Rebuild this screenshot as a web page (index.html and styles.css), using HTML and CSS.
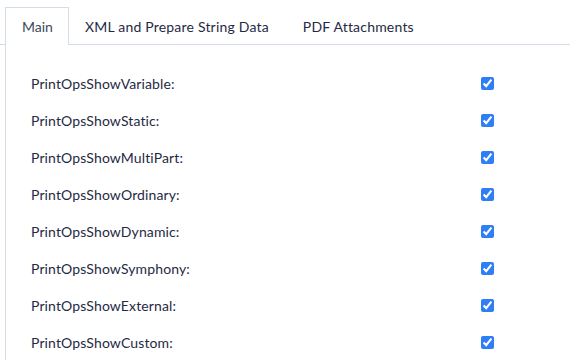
FILE: index.html
```html
<!DOCTYPE html>
<html>
<head>
  <title>Print Options</title>
  <link rel="stylesheet" href="styles.css">
</head>
<body>
  <div class="tabs">
    <div class="tab active">Main</div>
    <div class="tab">XML and Prepare String Data</div>
    <div class="tab">PDF Attachments</div>
  </div>

  <div class="panel">
    <label class="row"><span class="label">PrintOpsShowVariable:</span><input type="checkbox" checked></label>
    <label class="row"><span class="label">PrintOpsShowStatic:</span><input type="checkbox" checked></label>
    <label class="row"><span class="label">PrintOpsShowMultiPart:</span><input type="checkbox" checked></label>
    <label class="row"><span class="label">PrintOpsShowOrdinary:</span><input type="checkbox" checked></label>
    <label class="row"><span class="label">PrintOpsShowDynamic:</span><input type="checkbox" checked></label>
    <label class="row"><span class="label">PrintOpsShowSymphony:</span><input type="checkbox" checked></label>
    <label class="row"><span class="label">PrintOpsShowExternal:</span><input type="checkbox" checked></label>
    <label class="row"><span class="label">PrintOpsShowCustom:</span><input type="checkbox" checked></label>
  </div>
</body>
</html>
```

FILE: styles.css
```css
:root {
  --text-color: #1f2a44;
  --tab-active: #3b4a5c;
  --border-color: #d3dee8;
  --check-color: #2f7ef5;
}

* {
  margin: 0;
  padding: 0;
  box-sizing: border-box;
}

body {
  font-family: 'Lato', sans-serif;
  font-size: 14px;
  letter-spacing: 0.12px;
  color: var(--text-color);
  background-color: #fff;
  overflow: hidden;
}

.tabs {
  display: flex;
  padding: 7px 0 0 5px;
  border-bottom: 1px solid var(--border-color);
}

.tab {
  height: 38px;
  padding: 0 16px;
  line-height: 37px;
  margin-bottom: -1px;
  border: 1px solid transparent;
  border-bottom: none;
  white-space: nowrap;
  letter-spacing: 0.2px;
}

.tab.active {
  color: var(--tab-active);
  border-color: var(--border-color);
  background-color: #fff;
  width: 64px;
  letter-spacing: 0;
  margin-right: -1px;
}

.panel {
  margin-left: 5px;
  border-left: 1px solid var(--border-color);
  padding: 20px 0 0 25px;
  height: 320px;
}

.row {
  display: grid;
  grid-template-columns: 450px 13px;
  align-items: center;
  height: 37px;
}

.row input {
  width: 13px;
  height: 13px;
  margin: 0;
  accent-color: var(--check-color);
}
```
